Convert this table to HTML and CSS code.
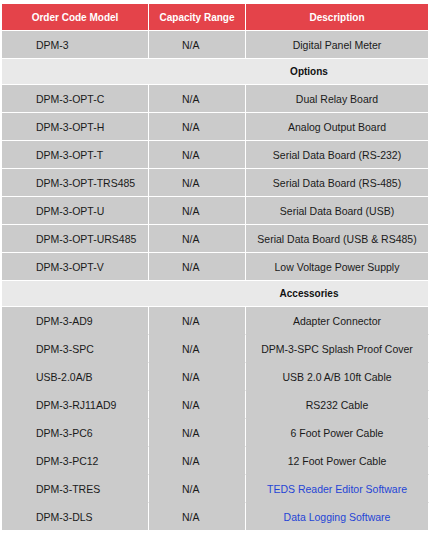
FILE: index.html
```html
<!DOCTYPE html>
<html>
<head>
<meta charset="utf-8">
<link rel="stylesheet" href="styles.css">
</head>
<body>
<table class="spec">
  <colgroup><col class="c1"><col class="c2"><col class="c3"></colgroup>
  <thead>
    <tr><th>Order Code Model</th><th>Capacity Range</th><th>Description</th></tr>
  </thead>
  <tbody>
    <tr><td class="code">DPM-3</td><td class="cap">N/A</td><td class="desc">Digital Panel Meter</td></tr>
    <tr class="group"><td colspan="3">Options</td></tr>
    <tr><td class="code">DPM-3-OPT-C</td><td class="cap">N/A</td><td class="desc">Dual Relay Board</td></tr>
    <tr><td class="code">DPM-3-OPT-H</td><td class="cap">N/A</td><td class="desc">Analog Output Board</td></tr>
    <tr><td class="code">DPM-3-OPT-T</td><td class="cap">N/A</td><td class="desc">Serial Data Board (RS-232)</td></tr>
    <tr><td class="code">DPM-3-OPT-TRS485</td><td class="cap">N/A</td><td class="desc">Serial Data Board (RS-485)</td></tr>
    <tr><td class="code">DPM-3-OPT-U</td><td class="cap">N/A</td><td class="desc">Serial Data Board (USB)</td></tr>
    <tr><td class="code">DPM-3-OPT-URS485</td><td class="cap">N/A</td><td class="desc">Serial Data Board (USB &amp; RS485)</td></tr>
    <tr><td class="code">DPM-3-OPT-V</td><td class="cap">N/A</td><td class="desc">Low Voltage Power Supply</td></tr>
    <tr class="group"><td colspan="3">Accessories</td></tr>
    <tr class="acc"><td class="code">DPM-3-AD9</td><td class="cap">N/A</td><td class="desc">Adapter Connector</td></tr>
    <tr class="acc"><td class="code">DPM-3-SPC</td><td class="cap">N/A</td><td class="desc">DPM-3-SPC Splash Proof Cover</td></tr>
    <tr class="acc"><td class="code">USB-2.0A/B</td><td class="cap">N/A</td><td class="desc">USB 2.0 A/B 10ft Cable</td></tr>
    <tr class="acc"><td class="code">DPM-3-RJ11AD9</td><td class="cap">N/A</td><td class="desc">RS232 Cable</td></tr>
    <tr class="acc"><td class="code">DPM-3-PC6</td><td class="cap">N/A</td><td class="desc">6 Foot Power Cable</td></tr>
    <tr class="acc"><td class="code">DPM-3-PC12</td><td class="cap">N/A</td><td class="desc">12 Foot Power Cable</td></tr>
    <tr class="acc"><td class="code">DPM-3-TRES</td><td class="cap">N/A</td><td class="desc"><a href="#">TEDS Reader Editor Software</a></td></tr>
    <tr class="acc last"><td class="code">DPM-3-DLS</td><td class="cap">N/A</td><td class="desc"><a href="#">Data Logging Software</a></td></tr>
  </tbody>
</table>
</body>
</html>
```

FILE: styles.css
```css
html, body {
  margin: 0;
  padding: 0;
  background: #fff;
}
body {
  padding: 4px 0 0 2px;
  font-family: "Liberation Sans", Arial, sans-serif;
  font-size: 10.5px;
  color: #1a1a1a;
}
.spec {
  border-collapse: separate;
  border-spacing: 0;
  table-layout: fixed;
  width: 427px;
}
.c1 { width: 147px; }
.c2 { width: 97px; }
.c3 { width: 183px; }
.spec th,
.spec td {
  padding: 0;
  border-right: 1px solid #fff;
  border-bottom: 1px solid #fff;
  white-space: nowrap;
  vertical-align: middle;
}
.spec th {
  background: #e4434a;
  color: #fff;
  font-weight: bold;
  font-size: 10px;
  height: 26px;
  text-align: center;
}
.spec td {
  background: #cbcbcb;
  height: 27px;
}
.spec td.code {
  text-align: left;
  padding-left: 34px;
}
.spec td.cap {
  text-align: left;
  padding-left: 33px;
}
.spec td.desc {
  text-align: center;
}
.spec tr.group td {
  background: #e9e9e9;
  font-weight: bold;
  font-size: 10px;
  text-align: center;
  padding-left: 188px;
  color: #111;
  height: 25px;
}
.spec tr.acc td {
  border-bottom-color: #cbcbcb;
}
.spec tr.acc.last td {
  border-bottom-color: #fff;
}
.spec a {
  color: #2545d6;
  text-decoration: none;
}
```
